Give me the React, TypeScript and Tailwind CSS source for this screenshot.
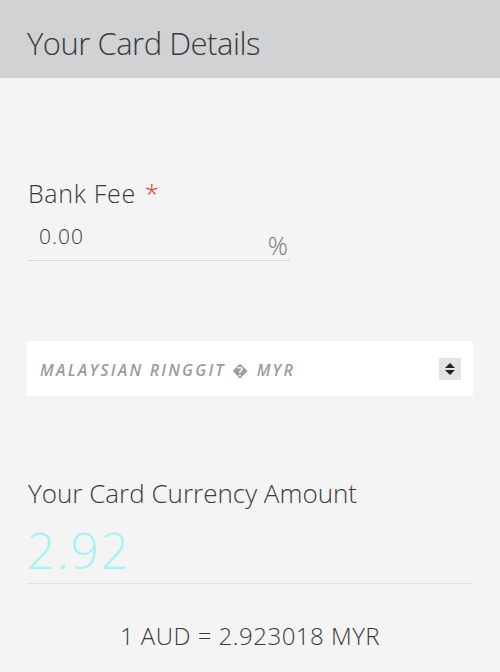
import React from "react";

export default function App() {
  const font = { fontFamily: '"Open Sans", "Noto Sans", sans-serif' };
  return (
    <div className="w-[500px] h-[672px] bg-[#f4f4f4] overflow-hidden" style={font}>
      <div className="h-[78px] bg-[#d1d2d4] pl-[27px] pt-[23px]">
        <h1 className="text-[31px] leading-[40px] font-light text-[#3a3a3a] tracking-[-0.5px]">Your Card Details</h1>
      </div>
      <div className="px-[27px]">
        <div className="pt-[98px]">
          <div className="text-[25px] leading-[34px] font-light text-[#3a3a3a] pl-[1px] tracking-[0.7px]">
            Bank Fee <span className="text-[#e8322d] ml-[2px]">*</span>
          </div>
          <div className="w-[263px] mt-[11px] flex items-start justify-between border-b border-[#d6d6d6] h-[40px]">
            <span className="pl-[12px] text-[21px] leading-[30px] font-light text-[#3a3a3a] tracking-[1px]">0.00</span>
            <span className="text-[25px] leading-[30px] font-light text-[#777] pr-[2px] mt-[9px]">%</span>
          </div>
        </div>
        <div className="mt-[80px] h-[55px] bg-white flex items-center justify-between pl-[13px] pr-[12px]">
          <span className="text-[16px] font-semibold italic tracking-[2.2px] text-[#9a9b9d] mt-[2px]">MALAYSIAN RINGGIT � MYR</span>
          <div className="w-[22px] h-[22px] bg-[#e4e4e4] flex flex-col items-center justify-center gap-[2px]">
            <svg width="10" height="5" viewBox="0 0 10 5"><path d="M0 5 L5 0 L10 5 Z" fill="#222" /></svg>
            <svg width="10" height="5" viewBox="0 0 10 5"><path d="M0 0 L5 5 L10 0 Z" fill="#222" /></svg>
          </div>
        </div>
        <div className="mt-[80px]">
          <div className="text-[26px] leading-[34px] font-light text-[#3a3a3a] pl-[1px]">Your Card Currency Amount</div>
          <div className="text-[50px] leading-[64px] font-light text-[#a8f2f6] mt-[8px] tracking-[1.5px]">2.92</div>
          <div className="border-b border-[#e2e2e2] mt-[1px]"></div>
          <div className="text-center text-[24px] leading-[32px] font-light text-[#3a3a3a] mt-[36px] tracking-[0.5px]">1 AUD = 2.923018 MYR</div>
        </div>
      </div>
    </div>
  );
}
